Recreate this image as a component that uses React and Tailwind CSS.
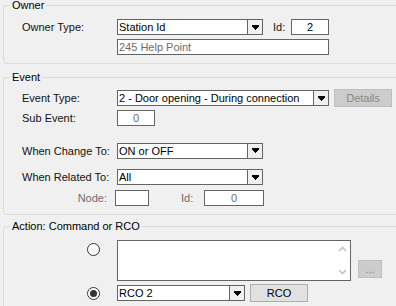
const font = { fontFamily: '"Liberation Sans", Arial, sans-serif' };

function Arrow() {
  return (
    <svg width="7" height="5" viewBox="0 0 7 5" shapeRendering="crispEdges">
      <rect x="0" y="0" width="7" height="2" fill="#000" />
      <rect x="1" y="2" width="5" height="1" fill="#000" />
      <rect x="2" y="3" width="3" height="1" fill="#000" />
      <rect x="3" y="4" width="1" height="1" fill="#000" />
    </svg>
  );
}

function Combo({ width, value }) {
  return (
    <div className={`flex h-[16px] shrink-0 border border-[#646464] bg-white ${width}`}>
      <span className="flex-1 truncate pl-[1px] text-[11px] leading-[14px] text-black">{value}</span>
      <div className="flex w-[15px] items-center justify-center border-l border-[#646464] bg-[#f0f0f0]">
        <Arrow />
      </div>
    </div>
  );
}

function TextBox({ width, value, muted, center }) {
  return (
    <div
      className={`h-[16px] shrink-0 border border-[#646464] bg-white px-[1px] text-[11px] leading-[14px] ${width} ${
        muted ? "text-[#6d6d6d]" : "text-black"
      } ${center ? "text-center" : ""}`}
    >
      {value}
    </div>
  );
}

function Group({ title, className, children }) {
  return (
    <section className={`relative ml-[3px] w-[410px] rounded-[3px] border border-[#dcdcdc] ${className}`}>
      <span className="absolute -top-[7px] left-[6px] bg-[#f0f0f0] px-[2px] text-[11px] leading-[13px] text-black">
        {title}
      </span>
      {children}
    </section>
  );
}

function Radio({ checked }) {
  return (
    <div className="flex h-[13px] w-[13px] items-center justify-center rounded-full border border-[#333] bg-white">
      {checked && <div className="h-[7px] w-[7px] rounded-full bg-[#333]" />}
    </div>
  );
}

function Chevron({ up }) {
  return (
    <svg width="9" height="6" viewBox="0 0 9 6">
      <path d={up ? "M1 5 L4.5 1.5 L8 5" : "M1 1 L4.5 4.5 L8 1"} fill="none" stroke="#c4c4c4" strokeWidth="1.6" />
    </svg>
  );
}

export default function App() {
  return (
    <div className="h-[306px] w-[396px] overflow-hidden bg-[#f0f0f0] pt-[5px] text-[11px] text-[#111]" style={font}>
      <Group title="Owner" className="h-[59px]">
        <div className="mt-[13px] flex items-center">
          <span className="w-[113px] pl-[18px]">Owner Type:</span>
          <Combo width="w-[146px]" value="Station Id" />
          <span className="ml-[10px] w-[18px]">Id:</span>
          <TextBox width="w-[38px]" value="2" center />
        </div>
        <div className="mt-[3px] flex pl-[113px]">
          <TextBox width="w-[212px]" value="245 Help Point" muted />
        </div>
      </Group>

      <Group title="Event" className="mt-[13px] h-[138px]">
        <div className="mt-[11px] flex items-center">
          <span className="w-[113px] pl-[18px]">Event Type:</span>
          <Combo width="w-[212px]" value="2 - Door opening - During connection" />
          <button
            type="button"
            className="ml-[5px] h-[18px] w-[58px] border border-[#bfbfbf] bg-[#cccccc] text-[11px] leading-[16px] text-[#8a8a8a]"
          >
            Details
          </button>
        </div>
        <div className="mt-[3px] flex items-center">
          <span className="w-[113px] pl-[18px]">Sub Event:</span>
          <TextBox width="w-[38px]" value="0" muted center />
        </div>
        <div className="mt-[16px] flex items-center">
          <span className="w-[113px] pl-[18px]">When Change To:</span>
          <Combo width="w-[146px]" value="ON or OFF" />
        </div>
        <div className="mt-[10px] flex items-center">
          <span className="w-[113px] pl-[18px]">When Related To:</span>
          <Combo width="w-[146px]" value="All" />
        </div>
        <div className="mt-[4px] flex items-center">
          <span className="w-[103px] text-right text-[#6d6d6d]">Node:</span>
          <div className="ml-[8px] h-[16px] w-[34px] border border-[#646464] bg-white" />
          <span className="ml-[32px] w-[23px] text-[#6d6d6d]">Id:</span>
          <TextBox width="w-[60px]" value="0" muted center />
        </div>
      </Group>

      <Group title="Action: Command or RCO" className="mt-[11px] h-[100px]">
        <div className="mt-[13px] flex">
          <div className="flex w-[113px] items-start justify-end pr-[17px] pt-[3px]">
            <Radio />
          </div>
          <div className="flex h-[41px] w-[234px] justify-end border border-[#646464] bg-white">
            <div className="flex w-[16px] flex-col items-center justify-between py-[5px]">
              <Chevron up />
              <Chevron />
            </div>
          </div>
          <button
            type="button"
            className="ml-[7px] mt-[20px] h-[18px] w-[24px] border border-[#bfbfbf] bg-[#cccccc] text-[11px] leading-[14px] text-[#8a8a8a]"
          >
            ...
          </button>
        </div>
        <div className="mt-[3px] flex items-center">
          <div className="flex w-[113px] items-center justify-end pr-[17px]">
            <Radio checked />
          </div>
          <Combo width="w-[128px]" value="RCO 2" />
          <button
            type="button"
            className="ml-[5px] h-[18px] w-[58px] border border-[#adadad] bg-[#e1e1e1] text-[11px] leading-[16px] text-black"
          >
            RCO
          </button>
        </div>
      </Group>
    </div>
  );
}
